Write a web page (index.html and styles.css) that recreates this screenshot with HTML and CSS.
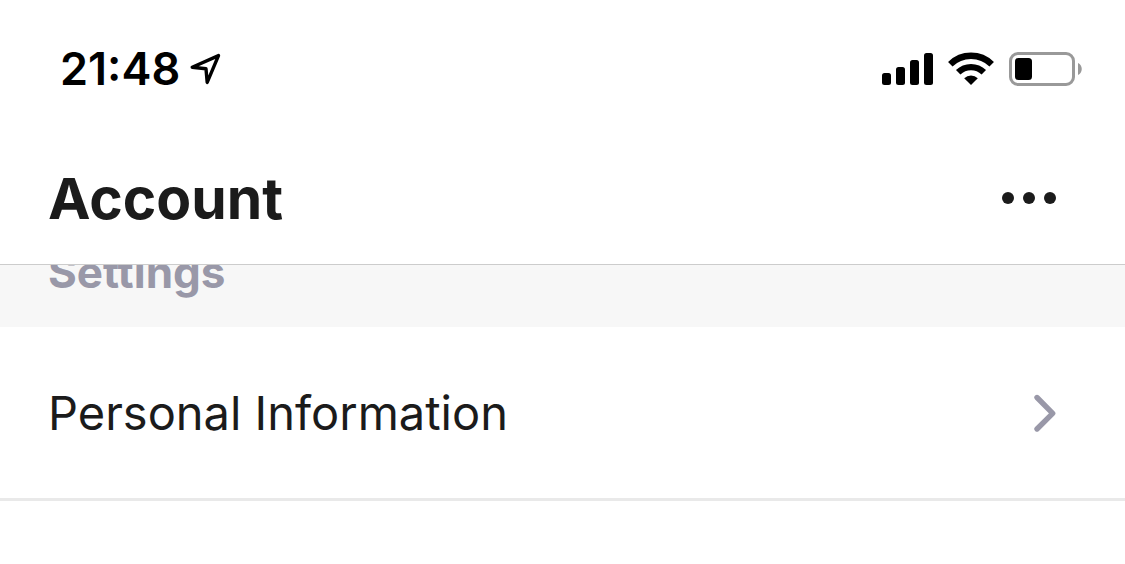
FILE: index.html
```html
<!DOCTYPE html>
<html lang="en">
<head>
<meta charset="utf-8">
<meta name="viewport" content="width=device-width, initial-scale=1">
<title>Account</title>
<link rel="stylesheet" href="styles.css">
</head>
<body>
<div class="status-bar">
  <div class="status-left">
    <time class="clock">21:48</time>
    <svg class="location" width="32" height="32" viewBox="0 0 32 32" aria-hidden="true">
      <path d="M2.2 14.2 28.5 2.6 17.2 29.4 16 15.8Z" fill="none" stroke="#000" stroke-width="3.4" stroke-linejoin="round"/>
    </svg>
  </div>
  <div class="status-right">
    <svg width="52" height="32" viewBox="0 0 52 32" aria-label="Signal">
      <rect x="0" y="20" width="9" height="12" rx="2.5"/>
      <rect x="14" y="14" width="9" height="18" rx="2.5"/>
      <rect x="28" y="7" width="9" height="25" rx="2.5"/>
      <rect x="42" y="0" width="9" height="32" rx="2.5"/>
    </svg>
    <svg class="wifi" width="46" height="34" viewBox="0 0 46 34" aria-label="Wi-Fi">
      <g fill="none" stroke="#000" stroke-width="6.4">
        <path d="M2.3 12.2A29.5 29.5 0 0 1 43.7 12.2"/>
        <path d="M10.2 20.3A18.4 18.4 0 0 1 35.8 20.3"/>
      </g>
      <path d="M16.2 26.2A10 10 0 0 1 29.8 26.2L23 33Z"/>
    </svg>
    <svg width="74" height="34" viewBox="0 0 74 34" aria-label="Battery">
      <rect x="1.5" y="1.5" width="63" height="31" rx="7.5" fill="none" stroke="#999" stroke-width="3"/>
      <rect x="6" y="6" width="17" height="22" rx="3.5"/>
      <path d="M69 11C74 13 74 21 69 23Z" fill="#999"/>
    </svg>
  </div>
</div>
<header class="header">
  <h1 class="title">Account</h1>
  <button class="more" type="button" aria-label="More options">
    <svg width="54" height="12" viewBox="0 0 54 12" fill="currentColor" aria-hidden="true">
      <circle cx="6" cy="6" r="6"/><circle cx="27" cy="6" r="6"/><circle cx="48" cy="6" r="6"/>
    </svg>
  </button>
</header>
<main>
  <section class="section-head">
    <h2 class="section-title">Settings</h2>
  </section>
  <a class="row" href="#personal-information">
    <span>Personal Information</span>
    <svg width="24" height="40" viewBox="0 0 24 40" aria-hidden="true">
      <path d="M4 4.5 19.7 20.3 4 36" fill="none" stroke="#9998a8" stroke-width="5.4" stroke-linecap="round" stroke-linejoin="round"/>
    </svg>
  </a>
</main>
</body>
</html>
```
FILE: styles.css
```css
* {
  box-sizing: border-box;
}

body {
  margin: 0;
  background: #fff;
  color: #1b1b1b;
  font-family: Inter, "Liberation Sans", sans-serif;
}

.status-bar {
  display: flex;
  align-items: center;
  justify-content: space-between;
  padding: 42px 42px 42px 60px;
  color: #000;
}

.status-left,
.status-right {
  display: flex;
  align-items: center;
}

.status-left {
  gap: 10px;
}

.status-right {
  gap: 15px;
}

.clock {
  font-size: 45px;
  font-weight: 600;
  line-height: 54px;
}

.wifi {
  margin-left: -1px;
}

.header {
  display: flex;
  align-items: center;
  justify-content: space-between;
  padding: 23px 69px 29px 48px;
  border-bottom: 1px solid #ccc;
}

.title {
  margin: 0;
  padding-top: 2px;
  font-size: 57px;
  font-weight: 700;
  line-height: 72px;
}

.more {
  display: flex;
  padding: 0;
  border: 0;
  background: none;
  color: #1b1b1b;
}

.section-head {
  padding: 0 48px 31px;
  overflow: hidden;
  background: #f7f7f7;
}

.section-title {
  margin: -17px 0 0;
  color: #9998a8;
  font-size: 44px;
  font-weight: 700;
  line-height: 48px;
}

.row {
  display: flex;
  align-items: center;
  justify-content: space-between;
  padding: 56px 68px 55px 48px;
  border-bottom: 3px solid #e9e9e9;
  color: inherit;
  font-size: 47px;
  line-height: 60px;
  text-decoration: none;
}
```
